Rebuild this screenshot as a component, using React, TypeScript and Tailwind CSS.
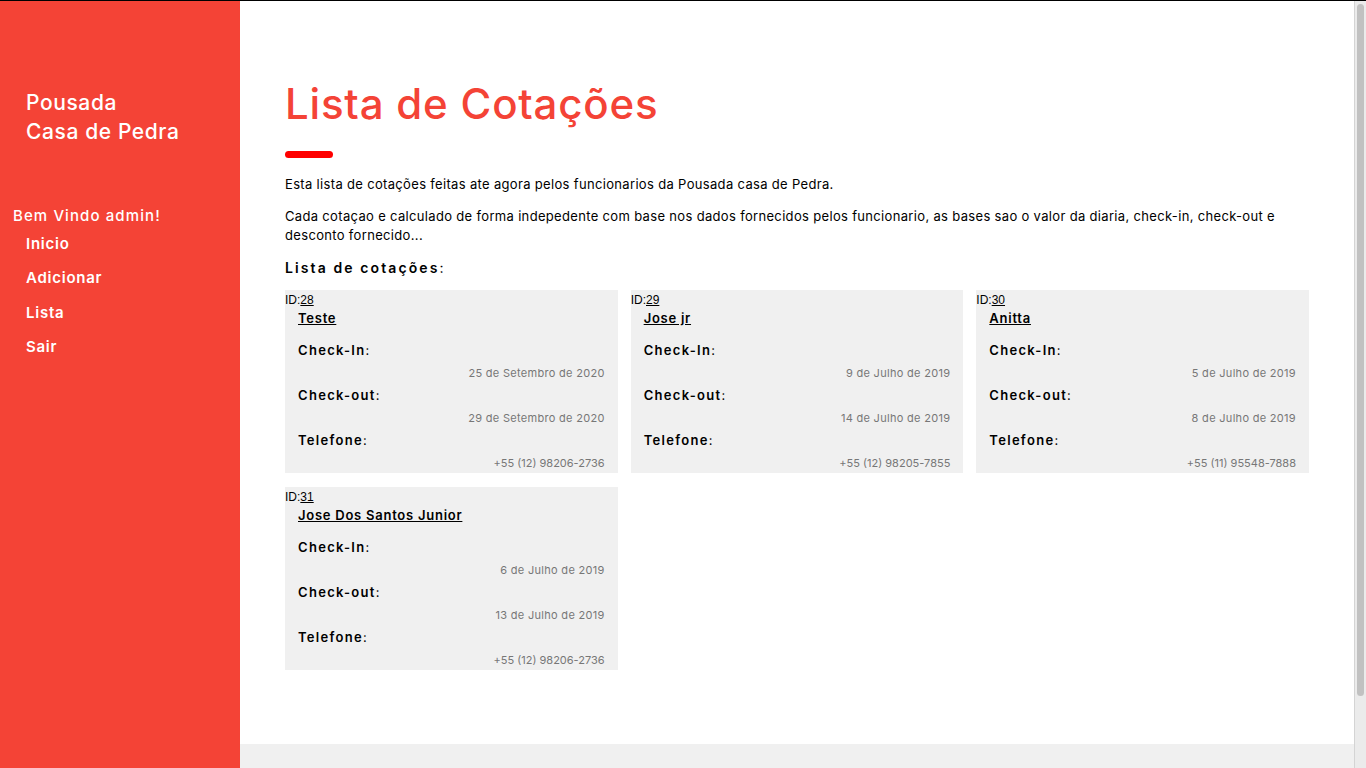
const cotacoes = [
  { id: 28, nome: "Teste", checkin: "25 de Setembro de 2020", checkout: "29 de Setembro de 2020", telefone: "+55 (12) 98206-2736" },
  { id: 29, nome: "Jose jr", checkin: "9 de Julho de 2019", checkout: "14 de Julho de 2019", telefone: "+55 (12) 98205-7855" },
  { id: 30, nome: "Anitta", checkin: "5 de Julho de 2019", checkout: "8 de Julho de 2019", telefone: "+55 (11) 95548-7888" },
  { id: 31, nome: "Jose Dos Santos Junior", checkin: "6 de Julho de 2019", checkout: "13 de Julho de 2019", telefone: "+55 (12) 98206-2736" }
];

const navItems = ["Inicio", "Adicionar", "Lista", "Sair"];

function Sidebar() {
  return (
    <aside className="w-[240px] shrink-0 bg-[#f44336] text-white">
      <h1 className="pl-[26px] pt-[87px] text-[21px] font-medium leading-[29px] tracking-[0.6px]">
        Pousada
        <br />
        Casa de Pedra
      </h1>
      <p className="mt-[59px] pl-[13px] text-[15px] font-medium leading-[22px] tracking-[1.1px]">
        Bem Vindo admin!
      </p>
      <ul>
        {navItems.map(item => (
          <li
            key={item}
            className="pl-[26px] text-[15px] font-semibold leading-[34.3px] tracking-[0.75px]">
            {item}
          </li>
        ))}
      </ul>
    </aside>
  );
}

function Campo({ label, valor, telefone }: { label: string; valor: string; telefone?: boolean }) {
  return (
    <>
      <p className="pl-[13px] text-[13px] leading-[22px] tracking-[1.3px] text-black">
        <span className="font-semibold">{label}</span>:
      </p>
      <p
        className={`pr-[13px] pt-[2px] text-right text-[11px] leading-[21px] text-[#777] ${
          telefone ? "tracking-[0px]" : "tracking-[0.3px]"
        }`}>
        {valor}
      </p>
    </>
  );
}

function Cartao({ item }: { item: (typeof cotacoes)[number] }) {
  return (
    <div className="h-[183px] bg-[#f0f0f0]">
      <div className="h-[19px] text-[12px] leading-[20px] text-black [font-family:'Liberation_Sans',Arial,sans-serif]">
        ID:<span className="underline">{item.id}</span>
      </div>
      <div className="mb-[11px] pl-[13px] text-[13px] font-semibold leading-[19px] tracking-[0.75px] text-black">
        <span className="underline">{item.nome}</span>
      </div>
      <Campo label="Check-In" valor={item.checkin} />
      <Campo label="Check-out" valor={item.checkout} />
      <Campo label="Telefone" valor={item.telefone} telefone />
    </div>
  );
}

function BarraRolagem() {
  return (
    <div className="w-[12px] shrink-0 border-l border-[#d4d4d4] bg-[#ebebeb] px-[2px] pt-[3px]">
      <div className="h-[692px] rounded-full bg-[#c1c1c1]" />
    </div>
  );
}

export default function App() {
  return (
    <div className="flex h-screen overflow-hidden border-t border-black [font-family:Inter,'Noto_Sans',sans-serif]">
      <Sidebar />
      <main className="flex min-w-0 flex-1 flex-col">
        <section className="h-[743px] shrink-0 px-[45px] pt-[78px]">
          <h2 className="text-[42px] font-medium leading-[50px] tracking-[0.8px] text-[#f44336]">
            Lista de Cotações
          </h2>
          <div className="mt-[22px] h-[7px] w-[48px] rounded-full bg-[#ff0000]" />
          <p className="mt-[17px] text-[13px] leading-[19px] tracking-[0.33px] text-black">
            Esta lista de cotações feitas ate agora pelos funcionarios da Pousada casa de Pedra.
          </p>
          <p className="mt-[13px] text-[13px] leading-[19px] tracking-[0.33px] text-black">
            Cada cotaçao e calculado de forma indepedente com base nos dados fornecidos pelos funcionario, as bases sao o valor da diaria, check-in, check-out e desconto fornecido...
          </p>
          <p className="mt-[13px] text-[14px] leading-[19px] tracking-[2.1px] text-black">
            <span className="font-semibold">Lista de cotações</span>:
          </p>
          <div className="mt-[13px] grid grid-cols-3 gap-x-[13px] gap-y-[14px]">
            {cotacoes.map(item => (
              <Cartao key={item.id} item={item} />
            ))}
          </div>
        </section>
        <footer className="flex-1 bg-[#f0f0f0]" />
      </main>
      <BarraRolagem />
    </div>
  );
}
